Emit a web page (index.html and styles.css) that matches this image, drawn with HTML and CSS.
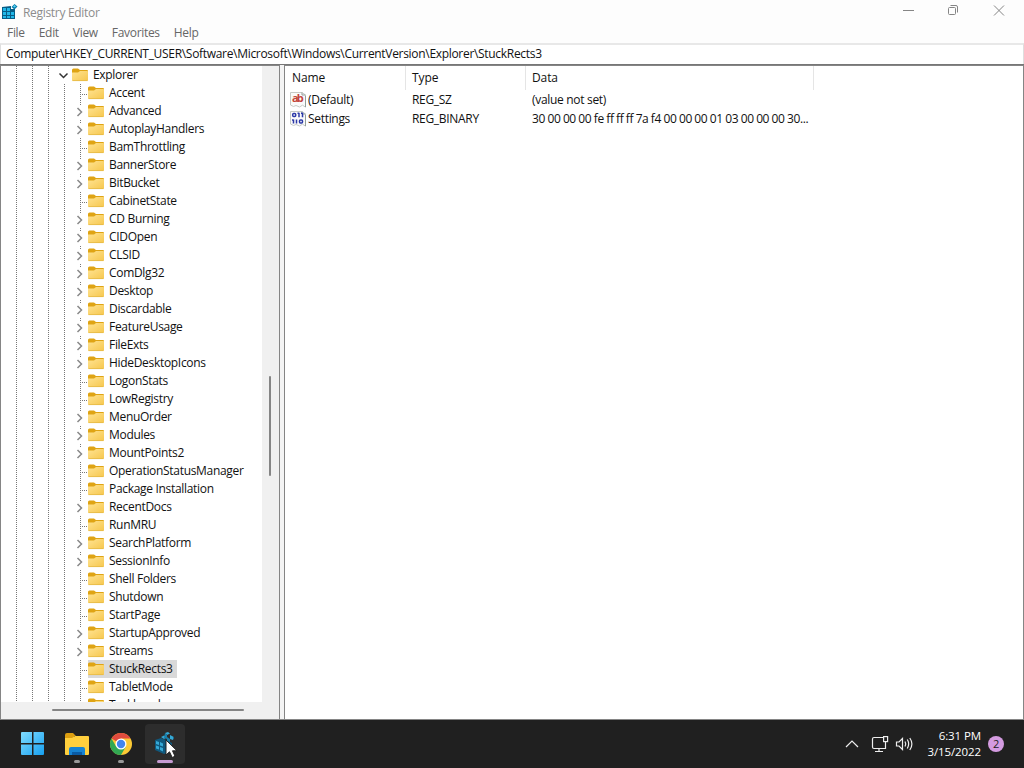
FILE: index.html
```
<!DOCTYPE html>
<html lang="en">
<head>
  <meta charset="UTF-8">
  <title>Registry Editor</title>
  <link rel="stylesheet" href="styles.css">
</head>
<body>

  <svg class="defs" aria-hidden="true">
    <linearGradient id="folderFill" x1="0" y1="0" x2="1" y2="1">
      <stop offset="0" stop-color="#ffe391"/>
      <stop offset="1" stop-color="#f6c74e"/>
    </linearGradient>
    <linearGradient id="winFill" gradientUnits="userSpaceOnUse" x1="0" y1="0" x2="23" y2="23">
      <stop offset="0" stop-color="#80dcff"/>
      <stop offset="1" stop-color="#17a0f0"/>
    </linearGradient>
    <symbol id="folder" viewBox="0 0 16 14">
      <path d="M0 2Q0 .5 1.500 .5H6L8 2H15Q16 2 16 3V8H0Z" fill="#dfa414"/>
      <path d="M0 4.500H6L8 3H15.500L16 3.500V12Q16 13 15 13H1Q0 13 0 12Z" fill="url(#folderFill)"/>
      <path d="M.5 12.6H15.5" stroke="#e5b843" stroke-width=".8"/>
    </symbol>
    <symbol id="value-page" viewBox="0 0 16 16">
      <path d="M.5 .5H12L15.5 3V15.2L12.5 13.2L9.5 15L6 13.5L3.5 14.5L.5 13Z" fill="#fafafa" stroke="#c6cac6"/>
      <path d="M12 .5V3H15.5M15.5 4V15" fill="none" stroke="#93a09a"/>
    </symbol>
  </svg>

  <div class="titlebar">
    <svg class="app-icon" viewBox="0 0 16 16">
      <path d="M0 3L9 2V5H13V15H0Z" fill="#075d86"/>
      <g fill="#20b7e8">
        <path d="M1 4H4V7H1ZM5 4H8V7H5ZM1 8H4V11H1ZM5 8H8V11H5ZM9 8H12V11H9ZM1 12H4V14H1ZM5 12H8V14H5ZM9 12H12V14H9Z"/>
      </g>
      <path d="M12.5 0L15.5 2.5L12.5 5.5L9.5 3Z" fill="#087cab"/>
      <path d="M12.5 1L14 2.5L12.5 3.5L11 2.5Z" fill="#55d3f5"/>
    </svg>
    <span class="title">Registry Editor</span>
    <svg class="controls" viewBox="0 0 110 20" fill="none" stroke="#858585">
      <path d="M3 10.5H14"/>
      <rect x="48.500" y="7.500" width="7" height="7" rx="1"/>
      <path d="M50.500 5.500H56Q57.500 5.500 57.500 7V12.500"/>
      <path d="M94 5.500L104 15.500M104 5.500L94 15.500"/>
    </svg>
  </div>

  <div class="menubar">
    <span>File</span>
    <span>Edit</span>
    <span>View</span>
    <span>Favorites</span>
    <span>Help</span>
  </div>

  <div class="address">Computer\HKEY_CURRENT_USER\Software\Microsoft\Windows\CurrentVersion\Explorer\StuckRects3</div>

  <div class="main">
    <div class="tree-pane">
      <div class="tree" id="tree"></div>
      <div class="vscroll"><div class="vthumb"></div></div>
      <div class="hscroll"><div class="hthumb"></div></div>
    </div>
    <div class="splitter"></div>
    <div class="values">
      <div class="value-head">
        <span>Name</span><span>Type</span><span>Data</span>
      </div>
      <div class="value-row">
        <span class="name">
          <svg viewBox="0 0 16 16"><use href="#value-page"/><text class="ab" x="2" y="10" textLength="11.500">ab</text></svg>
          (Default)
        </span>
        <span>REG_SZ</span>
        <span>(value not set)</span>
      </div>
      <div class="value-row">
        <span class="name">
          <svg viewBox="0 0 16 16"><use href="#value-page"/>
            <g fill="none" stroke="#2c3aa8" stroke-width="1.500">
              <rect x="2.700" y="2.500" width="3" height="3" rx="1"/>
              <path d="M9 1.800V6.200M12.500 1.800V6.200M7.500 2.300H9M11 2.300H12.500"/>
              <path d="M3.500 8.500V12.500M2 9H3.500M6.500 12.500V8.500"/>
              <rect x="9.500" y="9" width="3" height="3" rx="1"/>
            </g>
          </svg>
          Settings
        </span>
        <span>REG_BINARY</span>
        <span class="hex">30 00 00 00 fe ff ff ff 7a f4 00 00 00 01 03 00 00 00 30...</span>
      </div>
    </div>
  </div>

  <div class="taskbar">
    <div class="task start">
      <svg width="24" height="24" viewBox="0 0 24 24"><path fill="url(#winFill)" d="M0 1Q0 0 1 0H11V11H0ZM12.500 0H22Q23 0 23 1V11H12.500ZM0 12.500H11V23H1Q0 23 0 22ZM12.500 12.500H23V22Q23 23 22 23H12.500Z"/></svg>
    </div>
    <div class="task running">
      <svg width="26" height="24" viewBox="0 0 26 24">
        <path d="M1 3Q1 1 3 1H9L12 4H10V8H1Z" fill="#dc9e10"/>
        <path d="M1 6H8L11 4H24Q25 4 25 5V22Q25 23 24 23H2Q1 23 1 22Z" fill="#ffcf3d"/>
        <path d="M5 23V17Q5 15 7 15H19Q21 15 21 17V23Z" fill="#1683d2"/>
        <path d="M8 23V20H18V23Z" fill="#0a5ba4"/>
      </svg>
    </div>
    <div class="task running">
      <svg width="24" height="24" viewBox="0 0 24 24">
        <circle cx="12" cy="12" r="11" fill="#fbc934"/>
        <path d="M12 12L2.470 6.500A11 11 0 0 1 21.530 6.500H12Z" fill="#df4b3e"/>
        <path d="M2.470 6.500A11 11 0 0 0 12 23L16.760 14.750L12 12L7.240 14.750Z" fill="#32a853"/>
        <circle cx="12" cy="12" r="5.500" fill="#fff"/>
        <circle cx="12" cy="12" r="4.200" fill="#4285ed"/>
      </svg>
    </div>
    <div class="task active">
      <svg width="24" height="26" viewBox="0 0 24 26">
        <path d="M2 9L8 7L13 9L19 12V20L11 23L2 19Z" fill="#10597e"/>
        <g fill="#35a9d6">
          <path d="M3 10L6 11V14L3 13ZM7 11L10 12.500V15.500L7 14.500ZM3 14.500L6 15.500V18.500L3 17.500ZM7 16L10 17V20.500L7 19Z"/>
          <path d="M8 6L11 4.500L14 6L11 8ZM12 2L15 1L17 2.500L14 4ZM17 4L20 5.500V9L17 8Z"/>
        </g>
        <path d="M12 2L14 4V8L11 7ZM14 6L17 8V11L14 10ZM20 5L21 7L20 9Z" fill="#1980ae"/>
      </svg>
      <svg class="cursor" width="14" height="20" viewBox="0 0 14 20"><path d="M1 1V16L4.500 12.800L7.200 18.500L10 17.200L7.500 11.800H12Z" fill="#fff" stroke="#222"/></svg>
    </div>

    <div class="tray">
      <svg width="72" height="20" viewBox="0 0 72 20" fill="none" stroke="#eee" stroke-width="1.200">
        <path d="M1 13L7 7L13 13"/>
        <path d="M38 3.500H29Q27.500 3.500 27.500 5V13Q27.500 14.500 29 14.500H40.500V8M34 14.500V17.500M30 17.500H38"/>
        <rect x="38.600" y="2.600" width="4" height="5"/>
        <path d="M51.500 8H54L57.500 4.500V15.500L54 12H51.500Z"/>
        <path d="M60 7.500Q61.500 10 60 12.500M62.300 5.500Q65 10 62.300 14.500M64.800 4Q69 10 64.800 16"/>
      </svg>
      <div class="clock"><div>6:31 PM</div><div>3/15/2022</div></div>
      <div class="badge">2</div>
    </div>
  </div>

  <script>
    // "+" marks a key that has subkeys
    const keys = [
      "Accent", "+Advanced", "+AutoplayHandlers", "BamThrottling", "+BannerStore",
      "+BitBucket", "CabinetState", "+CD Burning", "+CIDOpen", "+CLSID", "+ComDlg32",
      "+Desktop", "+Discardable", "+FeatureUsage", "+FileExts", "+HideDesktopIcons",
      "LogonStats", "LowRegistry", "+MenuOrder", "+Modules", "+MountPoints2",
      "OperationStatusManager", "Package Installation", "+RecentDocs", "RunMRU",
      "+SearchPlatform", "+SessionInfo", "Shell Folders", "Shutdown", "StartPage",
      "+StartupApproved", "+Streams", "StuckRects3", "TabletMode", "Taskband"
    ];
    const folder = '<svg class="folder"><use href="#folder"/></svg>';
    const guide = '<i class="guide"></i>';
    const right = '<svg viewBox="0 0 16 18"><path d="M5.500 6L9.500 10L5.500 14"/></svg>';
    const down = '<svg viewBox="0 0 16 18"><path d="M3.500 7.500L7.500 11.500L11.500 7.500"/></svg>';

    let html = `<div class="row">${guide.repeat(3)}<i class="node open">${down}</i>${folder}<span>Explorer</span></div>`;
    for (const key of keys) {
      const parent = key[0] === "+";
      const name = parent ? key.slice(1) : key;
      html += `<div class="row${name === "StuckRects3" ? " selected" : ""}">${guide.repeat(4)}` +
        `<i class="node ${parent ? "closed" : "leaf"}">${parent ? right : ""}</i>${folder}<span>${name}</span></div>`;
    }
    document.getElementById("tree").innerHTML = html;
  </script>

</body>
</html>
```
FILE: styles.css
```
* {
  box-sizing: border-box;
}

body {
  margin: 0;
  width: 1024px;
  height: 768px;
  overflow: hidden;
  display: flex;
  flex-direction: column;
  background: #fdfdfd;
  color: #111;
  font-family: "Open Sans", "Noto Sans", sans-serif;
  font-size: 12px;
  font-stretch: 92%;
  letter-spacing: -0.31px;
  white-space: nowrap;
}

.defs {
  position: absolute;
  width: 0;
  height: 0;
}

.titlebar {
  height: 24px;
  display: flex;
  align-items: center;
  padding-left: 2px;
  color: #8c8c8c;
}

.app-icon {
  width: 16px;
  height: 16px;
}

.title {
  margin-left: 5px;
}

.controls {
  width: 110px;
  height: 20px;
  margin-left: auto;
  margin-right: 14px;
  margin-bottom: 4px;
}

.menubar {
  height: 19px;
  display: flex;
  gap: 14px;
  padding-left: 7px;
  line-height: 18px;
  color: #666;
}

.address {
  height: 21px;
  border: 1px solid #dedede;
  border-top: 2px solid #e8e8e8;
  border-bottom: 0;
  padding-left: 5px;
  line-height: 18px;
  background: #fff;
}

.main {
  height: 656px;
  display: flex;
  border-top: 1px solid #777;
  border-bottom: 1px solid #858585;
}

.tree-pane {
  width: 280px;
  display: grid;
  grid-template-columns: 261px 1fr;
  grid-template-rows: 636px 1fr;
  border: 1px solid #858585;
  border-width: 1px 1px 0;
  background: #f0f0f0;
}

.tree {
  overflow: hidden;
  background: #fff;
}

.row {
  height: 18px;
  display: flex;
  align-items: center;
}

.guide,
.node {
  flex: none;
  width: 16px;
  height: 18px;
  background: repeating-linear-gradient(#777 0 1px, transparent 1px 2px) right top / 1px 18px no-repeat;
}

.tree .node {
  margin-left: 7px;
  background-position: 8px 0;
  width: 16px;
}

.node svg {
  display: block;
  width: 16px;
  height: 18px;
  fill: none;
  stroke: #888;
  stroke-width: 1.5;
}

.tree .open {
  background: none;
}

.open svg {
  stroke: #333;
}

.tree .closed {
  background-size: 1px 4px;
}

.tree .leaf {
  background:
    repeating-linear-gradient(#777 0 1px, transparent 1px 2px) 8px 0 / 1px 18px no-repeat,
    repeating-linear-gradient(90deg, #777 0 1px, transparent 1px 2px) 8px 10px / 8px 1px no-repeat;
}

.folder {
  flex: none;
  width: 16px;
  height: 14px;
}

.row span {
  line-height: 18px;
  padding: 0 4px 0 5px;
}

.selected .folder,
.selected span {
  height: 18px;
  background: #d9d9d9;
}

.vscroll {
  padding: 310px 0 0 7px;
}

.vthumb {
  width: 2px;
  height: 100px;
  border-radius: 1px;
  background: #858585;
}

.hscroll {
  padding: 7px 0 0 51px;
}

.hthumb {
  width: 192px;
  height: 2px;
  border-radius: 1px;
  background: #858585;
}

.splitter {
  width: 4px;
  background: #f4f4f4;
}

.values {
  flex: 1;
  border: 1px solid #858585;
  border-bottom: 0;
  background: #fff;
}

.value-head,
.value-row {
  display: grid;
  grid-template-columns: 121px 120px 288px;
}

.value-head {
  height: 24px;
  line-height: 24px;
}

.value-head span {
  padding-left: 7px;
  border-right: 1px solid #e5e5e5;
  letter-spacing: -0.1px;
}

.value-head span + span {
  padding-left: 6px;
}

.value-row {
  height: 19px;
  line-height: 19px;
}

.value-row span {
  padding-left: 6px;
}

.value-row .name {
  display: flex;
  align-items: center;
  gap: 2px;
  padding-left: 5px;
}

.value-row .hex {
  letter-spacing: -0.4px;
  word-spacing: -0.2px;
}

.name svg {
  width: 16px;
  height: 16px;
}

.ab {
  font: bold 11px "Open Sans", sans-serif;
  fill: #c4453c;
}

.taskbar {
  height: 48px;
  display: flex;
  align-items: center;
  padding-left: 13px;
  gap: 4px;
  background: #202020;
}

.task {
  position: relative;
  width: 40px;
  height: 40px;
  display: flex;
  align-items: center;
  justify-content: center;
  border-radius: 4px;
}

.active {
  background: #2d2d2d;
}

.running::after,
.active::after {
  content: "";
  position: absolute;
  bottom: 1px;
  width: 6px;
  height: 3px;
  border-radius: 2px;
  background: #999;
}

.active::after {
  width: 16px;
  background: #c79bd2;
}

.cursor {
  position: absolute;
  left: 20px;
  top: 15px;
}

.tray {
  margin-left: auto;
  margin-right: 20px;
  display: flex;
  align-items: center;
  color: #fff;
}

.clock {
  width: 64px;
  text-align: right;
  line-height: 16px;
  font-size: 11.5px;
  letter-spacing: -0.1px;
}

.badge {
  width: 16px;
  height: 16px;
  margin-left: 7px;
  border-radius: 50%;
  background: #d49be0;
  color: #222;
  font-size: 11px;
  line-height: 16px;
  text-align: center;
}
```
